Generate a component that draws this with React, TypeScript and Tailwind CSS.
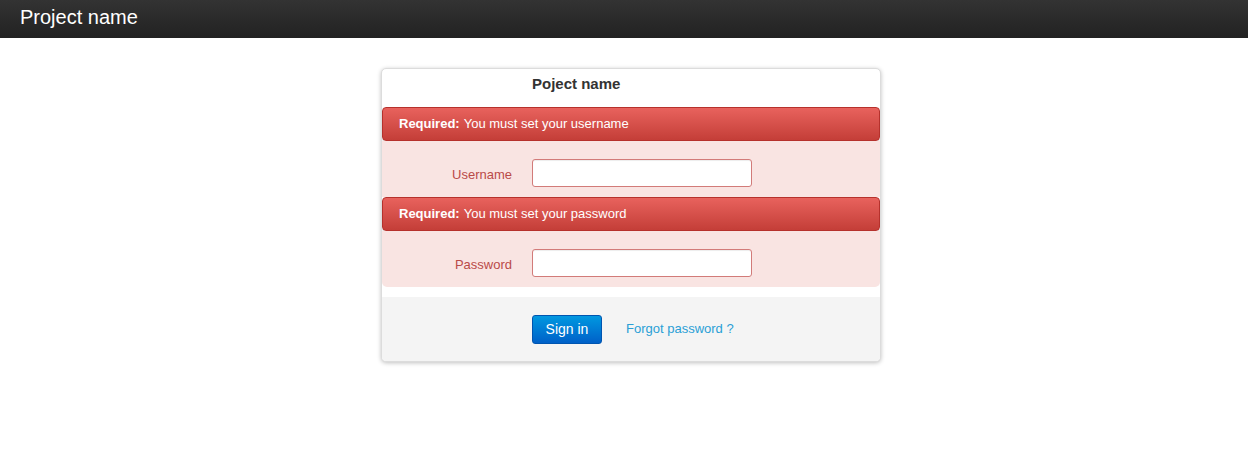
import React from 'react';

const font = { fontFamily: '"Liberation Sans", Arial, sans-serif' };

const Alert: React.FC<{ field: string }> = ({ field }) => (
    <div className="h-[34px] flex items-center px-4 text-[13px] text-white rounded-[4px] border border-[#b6312c] bg-gradient-to-b from-[#e8625d] to-[#c43e38] shadow-[0_1px_1px_rgba(0,0,0,0.15)]">
        <span className="font-bold mr-1">Required:</span>
        <span>You must set your {field}</span>
    </div>
);

const Field: React.FC<{ label: string; type: string }> = ({ label, type }) => (
    <div className="h-[56px] flex items-start pt-[18px]">
        <label className="w-[130px] pt-[2px] text-right text-[13px] leading-[28px] text-[#b94a48]">{label}</label>
        <input
            type={type}
            className="ml-5 w-[220px] h-[28px] bg-white border border-[#d27b79] rounded-[3px] px-2 text-[13px] outline-none shadow-[inset_0_1px_1px_rgba(0,0,0,0.075)]"
        />
    </div>
);

export default function App() {
    return (
        <div className="min-h-[471px] bg-white" style={font}>
            <div className="h-[38px] flex items-center px-5 pb-[4px] bg-gradient-to-b from-[#333333] to-[#222222]">
                <span className="text-[20px] text-white">Project name</span>
            </div>

            <div className="flex justify-center pt-[30px] pl-[14px]">
                <div className="w-[500px] bg-white rounded-[5px] border border-[#dcdcdc] shadow-[0_1px_4px_rgba(0,0,0,0.25)] overflow-hidden">
                    <div className="h-[30px] flex items-center pl-[150px]">
                        <span className="text-[15px] font-bold text-[#333]">Poject name</span>
                    </div>
                    <div className="h-[8px]" />
                    <Alert field="username" />
                    <div className="bg-[#f9e4e2]">
                        <Field label="Username" type="text" />
                    </div>
                    <Alert field="password" />
                    <div className="bg-[#f9e4e2] rounded-b-[5px]">
                        <Field label="Password" type="password" />
                    </div>
                    <div className="h-[10px]" />
                    <div className="h-[64px] bg-[#f4f4f4] flex items-center pl-[150px]">
                        <button className="w-[70px] h-[29px] rounded-[3px] border border-[#0055b0] bg-gradient-to-b from-[#0498e0] to-[#0060c8] text-white text-[14px]">
                            Sign in
                        </button>
                        <a href="#" className="ml-6 text-[13px] text-[#2a9fd6]">Forgot password ?</a>
                    </div>
                </div>
            </div>
        </div>
    );
}
